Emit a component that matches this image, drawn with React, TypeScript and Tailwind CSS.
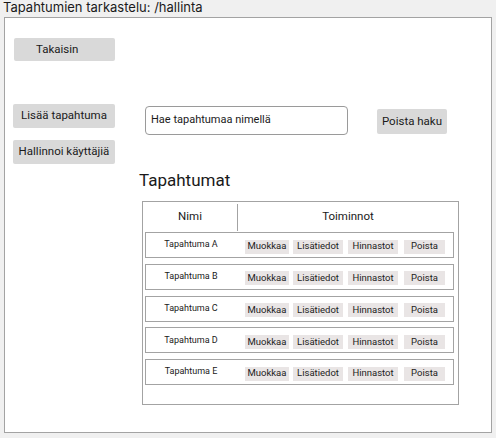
const ROWS = ['Tapahtuma A', 'Tapahtuma B', 'Tapahtuma C', 'Tapahtuma D', 'Tapahtuma E'];

function RowActions() {
  return (
    <div className="ml-[9px] mt-[3px] flex items-center text-[9.5px] text-[#222]">
      <span className="flex h-[14px] w-[44px] items-center justify-center bg-[#e9e5e5]">Muokkaa</span>
      <span className="ml-[4px] flex h-[14px] w-[50px] items-center justify-center bg-[#e9e5e5]">Lisätiedot</span>
      <span className="ml-[5px] flex h-[14px] w-[50px] items-center justify-center bg-[#e9e5e5]">Hinnastot</span>
      <span className="ml-[6px] flex h-[14px] w-[41px] items-center justify-center bg-[#e9e5e5]">Poista</span>
    </div>
  );
}

export default function App() {
  return (
    <div className="h-[438px] w-[496px] overflow-hidden bg-[#f0f0f0] font-['Roboto',sans-serif] text-[#1a1a1a]">
      <div className="h-[17px] pl-[3px] font-['Inter',sans-serif] text-[13px] leading-[15px]">
        Tapahtumien tarkastelu: /hallinta
      </div>

      <div className="ml-[4px] h-[416px] w-[488px] border border-[#a3a3a3] bg-white pl-[8px] pt-[20px]">
        <button className="ml-px flex h-[23px] w-[101px] items-center rounded-[2px] bg-[#d9d9d9] pl-[22px] text-[11.5px]">
          Takaisin
        </button>

        <div className="mt-[43px] flex">
          <div className="flex w-[102px] flex-col gap-[12px] whitespace-nowrap">
            <button className="flex h-[24px] items-center justify-center rounded-[2px] bg-[#d9d9d9] text-[11.5px]">
              Lisää tapahtuma
            </button>
            <button className="flex h-[24px] items-center justify-center rounded-[2px] bg-[#d9d9d9] text-[11.5px]">
              Hallinnoi käyttäjiä
            </button>
          </div>

          <div className="ml-[24px] flex flex-col">
            <div className="flex items-start">
              <div className="ml-[6px] mt-[2px] flex h-[29px] w-[203px] items-center rounded-[4px] border border-[#9a9a9a] pl-[5px] text-[11px]">
                Hae tapahtumaa nimellä
              </div>
              <button className="ml-[29px] mt-[5px] flex h-[25px] w-[70px] items-center justify-center rounded-[2px] bg-[#d9d9d9] text-[11.5px]">
                Poista haku
              </button>
            </div>

            <h2 className="mt-[34px] h-[22px] text-[17px] leading-[22px]">Tapahtumat</h2>

            <div className="ml-[3px] mt-[10px] h-[204px] w-[317px] border border-[#a3a3a3]">
              <div className="flex h-[30px] items-center text-[11.5px]">
                <div className="w-[94px] text-center">Nimi</div>
                <div className="h-[27px] border-l border-[#a3a3a3]" />
                <div className="flex-1 text-center">Toiminnot</div>
              </div>
              <div className="ml-[2px] flex w-[309px] flex-col gap-[5.75px]">
                {ROWS.map((name) => (
                  <div key={name} className="flex h-[26px] items-center border border-[#a3a3a3]">
                    <div className="w-[90px] text-center text-[9px]">{name}</div>
                    <RowActions />
                  </div>
                ))}
              </div>
            </div>
          </div>
        </div>
      </div>
    </div>
  );
}
